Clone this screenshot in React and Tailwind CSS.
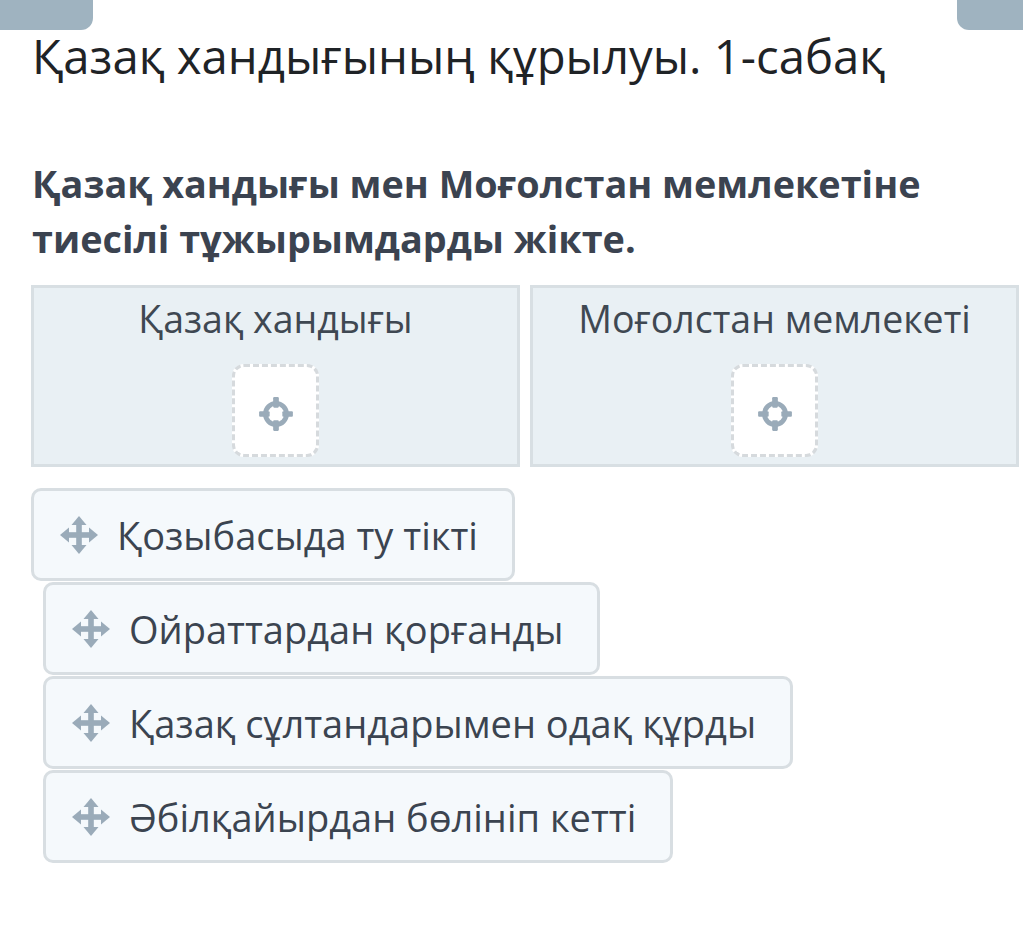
import React from "react";

const MoveIcon = () => (
  <svg width="40" height="40" viewBox="0 0 40 40" className="shrink-0">
    <g fill="#9aabb9">
      <rect x="17.2" y="8" width="5.6" height="24" />
      <rect x="8" y="17.2" width="24" height="5.6" />
      <polygon points="20,1 27.5,10 12.5,10" />
      <polygon points="20,39 27.5,30 12.5,30" />
      <polygon points="1,20 10,12.5 10,27.5" />
      <polygon points="39,20 30,12.5 30,27.5" />
    </g>
  </svg>
);

const TargetIcon = () => (
  <svg width="38" height="38" viewBox="0 0 36 36">
    <circle cx="18" cy="18" r="10" fill="none" stroke="#9aabb9" strokeWidth="4.5" />
    <g fill="#9aabb9">
      <rect x="15.3" y="2" width="5.4" height="10" rx="1" />
      <rect x="15.3" y="24" width="5.4" height="10" rx="1" />
      <rect x="2" y="15.3" width="10" height="5.4" rx="1" />
      <rect x="24" y="15.3" width="10" height="5.4" rx="1" />
    </g>
  </svg>
);

const Bin = ({ title }) => (
  <div className="flex-1 h-[182px] bg-[#e9f0f4] border-[3px] border-[#d8dfe3] flex flex-col items-center pt-[6px]">
    <div className="text-[37.5px] leading-[50px] text-[#3f4852]">{title}</div>
    <div className="mt-[20px] w-[87px] h-[93px] bg-white rounded-[12px] border-[3px] border-dashed border-[#d6dadd] flex items-center justify-center pt-[6px]">
      <TargetIcon />
    </div>
  </div>
);

const Item = ({ text, ml }) => (
  <div
    className={`${ml} self-start h-[93px] bg-[#f5f9fc] border-[3px] border-[#d8dee2] rounded-[10px] flex items-center pl-[25px] pr-[34px] gap-[18px]`}
  >
    <MoveIcon />
    <span className="text-[38px] text-[#3b4450] leading-none">{text}</span>
  </div>
);

export default function App() {
  return (
    <div
      className="relative w-[1023px] h-[944px] bg-white overflow-hidden"
      style={{ fontFamily: '"Open Sans", "Noto Sans", sans-serif' }}
    >
      <div className="absolute left-0 top-0 w-[93px] h-[30px] bg-[#9fb3c0] rounded-br-[12px]" />
      <div className="absolute right-0 top-0 w-[66px] h-[30px] bg-[#9fb3c0] rounded-bl-[12px]" />

      <div className="pt-[26px] pl-[32px]">
        <h1 className="text-[47.3px] leading-[60px] text-[#1f2326] font-normal">
          Қазақ хандығының құрылуы. 1-сабақ
        </h1>
        <p className="mt-[70px] text-[37.8px] leading-[55px] font-bold text-[#3b4350] w-[985px]">
          Қазақ хандығы мен Моғолстан мемлекетіне
          <br />
          тиесілі тұжырымдарды жікте.
        </p>
      </div>

      <div className="flex gap-[10px] pl-[31px] pr-[4px] mt-[19px]">
        <Bin title="Қазақ хандығы" />
        <Bin title="Моғолстан мемлекеті" />
      </div>

      <div className="flex flex-col pl-[31px] mt-[21px] gap-[1px]">
        <Item ml="ml-0" text="Қозыбасыда ту тікті" />
        <Item ml="ml-[12px]" text="Ойраттардан қорғанды" />
        <Item ml="ml-[12px]" text="Қазақ сұлтандарымен одақ құрды" />
        <Item ml="ml-[12px]" text="Әбілқайырдан бөлініп кетті" />
      </div>
    </div>
  );
}
